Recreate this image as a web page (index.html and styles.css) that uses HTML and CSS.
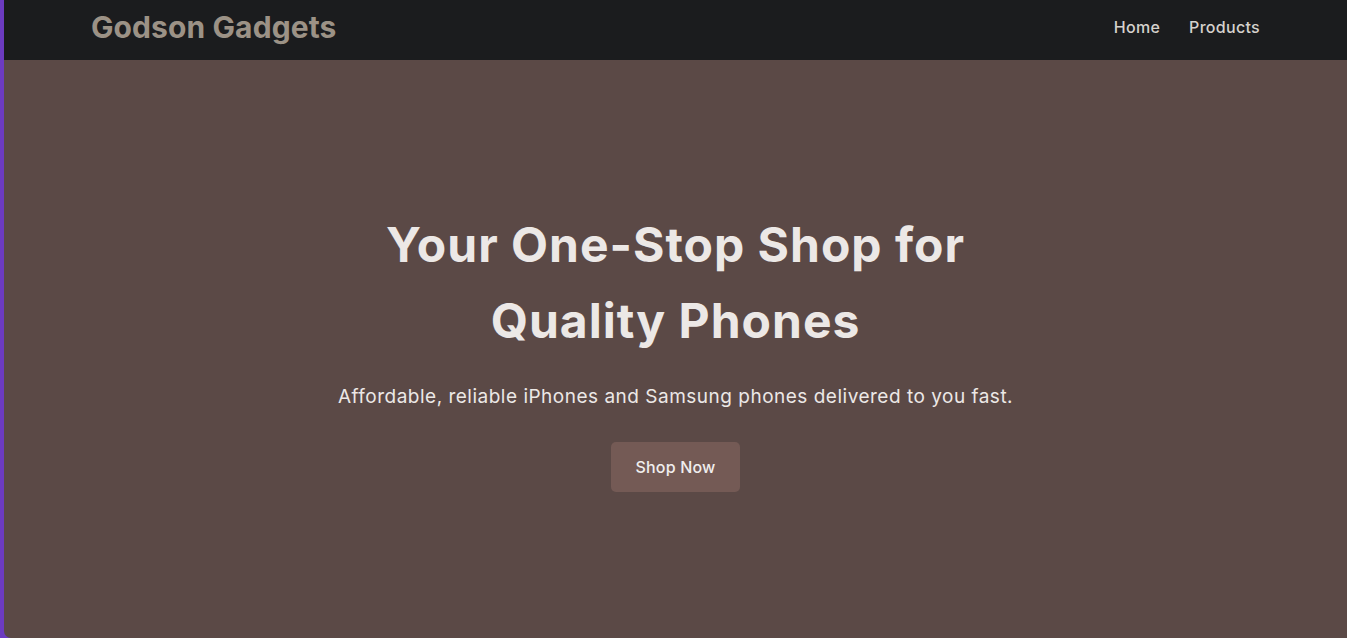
FILE: index.html
```html
<!DOCTYPE html>
<html lang="en">
<head>
<meta charset="utf-8">
<title>Godson Gadgets</title>
<link rel="stylesheet" href="styles.css">
</head>
<body>
<div class="window">
  <header class="navbar">
    <div class="logo">Godson Gadgets</div>
    <nav class="nav-links">
      <a href="#" class="nav-link">Home</a>
      <a href="#" class="nav-link">Products</a>
    </nav>
  </header>
  <main class="hero">
    <div class="hero-content">
      <h1 class="hero-title">Your One-Stop Shop for<br>Quality Phones</h1>
      <p class="hero-text">Affordable, reliable iPhones and Samsung phones delivered to you fast.</p>
      <a href="#" class="btn">Shop Now</a>
    </div>
  </main>
</div>
</body>
</html>
```

FILE: styles.css
```css
* { box-sizing: border-box; }
html, body { margin: 0; padding: 0; height: 100%; }
body {
  background: #6c3bc0;
  font-family: Inter, "Noto Sans", sans-serif;
  overflow: hidden;
}
.window {
  margin-left: 4px;
  height: 638px;
  display: flex;
  flex-direction: column;
  background: #5b4946;
  border-bottom-left-radius: 7px;
  overflow: hidden;
}
.navbar {
  height: 60px;
  flex: 0 0 60px;
  background: #1b1c1e;
  display: flex;
  align-items: center;
  justify-content: space-between;
  padding: 0 87px 6px;
}
.logo {
  color: #9c9286;
  font-size: 30px;
  font-weight: 700;
  letter-spacing: 0.1px;
}
.nav-links { display: flex; gap: 29px; }
.nav-link {
  color: #d6d2cd;
  text-decoration: none;
  font-size: 16px;
  font-weight: 500;
  letter-spacing: 0.3px;
}
.hero {
  flex: 1;
  display: flex;
  align-items: center;
  justify-content: center;
}
.hero-content { text-align: center; }
.hero-title {
  margin: 0;
  color: #ece8e6;
  font-size: 48px;
  line-height: 76px;
  font-weight: 700;
  letter-spacing: 1px;
}
.hero-text {
  margin: 24px 0 31px;
  color: #ece8e6;
  font-size: 19px;
  line-height: 28px;
  letter-spacing: 0.5px;
}
.btn {
  display: inline-block;
  background: #745a55;
  color: #f0eeee;
  text-decoration: none;
  font-size: 16px;
  font-weight: 500;
  letter-spacing: 0.2px;
  width: 129px;
  height: 50px;
  line-height: 50px;
  border-radius: 5px;
}
```
